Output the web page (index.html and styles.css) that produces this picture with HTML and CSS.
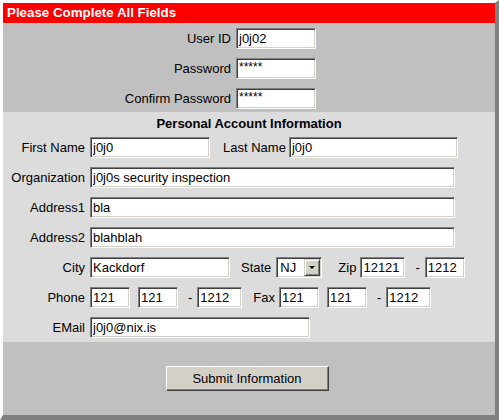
FILE: index.html
```html
<!DOCTYPE html>
<html lang="en">

<head>
    <meta charset="UTF-8">
    <title>Account Signup</title>
    <link rel="stylesheet" href="styles.css">
</head>

<body>
<form id="signup-form" class="frame">
    <div class="header">Please Complete All Fields</div>

    <!-- login data -->
    <div class="login">
        <label class="lbl">User ID</label>
        <input type="text" class="field w80" value="j0j02">
        <label class="lbl">Password</label>
        <input type="text" class="field w80 stars" value="*****">
        <label class="lbl">Confirm Password</label>
        <input type="text" class="field w80 stars" value="*****">
    </div>

    <!-- personal data -->
    <div class="personal">
        <div class="title">Personal Account Information</div>
        <div class="row">
            <label class="lbl">First Name</label>
            <input type="text" class="field w120" value="j0j0">
            <span class="sub ml13">Last Name</span>
            <input type="text" class="field w169 ml3" value="j0j0">
        </div>
        <div class="row">
            <label class="lbl">Organization</label>
            <input type="text" class="field w365" value="j0j0s security inspection">
        </div>
        <div class="row">
            <label class="lbl">Address1</label>
            <input type="text" class="field w365" value="bla">
        </div>
        <div class="row">
            <label class="lbl">Address2</label>
            <input type="text" class="field w365" value="blahblah">
        </div>
        <div class="row">
            <label class="lbl">City</label>
            <input type="text" class="field w140" value="Kackdorf">
            <span class="sub ml11">State</span>
            <span class="select ml5">
                <select>
                    <option>NJ</option>
                    <option>NY</option>
                    <option>PA</option>
                </select>
                <span class="arrow"></span>
            </span>
            <span class="sub ml16">Zip</span>
            <input type="text" class="field w45 ml4" value="12121">
            <span class="sub ml10">-</span>
            <input type="text" class="field w40 ml5" value="1212">
        </div>
        <div class="row">
            <label class="lbl">Phone</label>
            <input type="text" class="field w40" value="121">
            <input type="text" class="field w40 ml8" value="121">
            <span class="sub ml10">-</span>
            <input type="text" class="field w45 ml5" value="1212">
            <span class="sub ml11">Fax</span>
            <input type="text" class="field w40 ml4" value="121">
            <input type="text" class="field w40 ml8" value="121">
            <span class="sub ml10">-</span>
            <input type="text" class="field w45 ml5" value="1212">
        </div>
        <div class="row">
            <label class="lbl">EMail</label>
            <input type="text" class="field w220" value="j0j0@nix.is">
        </div>
    </div>

    <div class="actions">
        <button type="button" class="submit">Submit Information</button>
    </div>
</form>
</body>

</html>
```

FILE: styles.css
```css
html, body {
    margin: 0;
    height: 100%;
}

body {
    font-family: "Liberation Sans", Arial, sans-serif;
    font-size: 13px;
    color: #000;
    background-color: #fff;
}

.frame {
    box-sizing: border-box;
    width: 499px;
    height: 420px;
    margin: 0;
    border-top: 3px solid #fff;
    border-left: 3px solid #fff;
    border-right: 4px solid #808080;
    border-bottom: 5px solid #808080;
    display: flex;
    flex-direction: column;
}

.header {
    background-color: #f00;
    color: #fff;
    font-weight: bold;
    font-size: 13.33px;
    height: 20px;
    line-height: 20px;
    padding-left: 4px;
}

.login {
    background-color: #c0c0c0;
    display: grid;
    grid-template-columns: 228px auto;
    column-gap: 5px;
    row-gap: 9px;
    padding: 5px 0 3px;
    align-items: center;
}

.login .lbl {
    text-align: right;
}

.personal {
    background-color: #dcdcdc;
    padding: 4px 0 4px;
    display: flex;
    flex-direction: column;
    gap: 9px;
}

.title {
    font-weight: bold;
    text-align: center;
    line-height: 16px;
    margin-bottom: -4px;
}

.row {
    display: flex;
    align-items: center;
    height: 21px;
}

.row .lbl {
    width: 82px;
    text-align: right;
    margin-right: 5px;
    flex: none;
}

.sub {
    flex: none;
}

.field {
    box-sizing: border-box;
    height: 21px;
    margin: 0;
    padding: 0 2px;
    font-family: "Liberation Sans", Arial, sans-serif;
    font-size: 13px;
    color: #000;
    background-color: #fff;
    border: 1px solid;
    border-color: #808080 #fff #fff #808080;
    box-shadow: inset 1px 1px #404040, inset -1px -1px #d4d0c8;
    outline: none;
    flex: none;
}

.stars {
    font-size: 12px;
    padding-bottom: 4px;
}

.w40 { width: 40px; }
.w45 { width: 45px; }
.w80 { width: 80px; }
.w120 { width: 120px; }
.w140 { width: 140px; }
.w169 { width: 169px; }
.w220 { width: 220px; }
.w365 { width: 365px; }

.ml3 { margin-left: 3px; }
.ml4 { margin-left: 4px; }
.ml5 { margin-left: 5px; }
.ml8 { margin-left: 8px; }
.ml10 { margin-left: 10px; }
.ml11 { margin-left: 11px; }
.ml13 { margin-left: 13px; }
.ml16 { margin-left: 16px; }

/* fake win98 dropdown */
.select {
    position: relative;
    display: inline-block;
    width: 46px;
    height: 21px;
    flex: none;
}

.select select {
    appearance: none;
    -webkit-appearance: none;
    box-sizing: border-box;
    width: 46px;
    height: 21px;
    margin: 0;
    padding: 0 0 0 3px;
    font-family: "Liberation Sans", Arial, sans-serif;
    font-size: 13px;
    color: #000;
    background-color: #fff;
    border: 1px solid;
    border-color: #808080 #fff #fff #808080;
    box-shadow: inset 1px 1px #404040, inset -1px -1px #d4d0c8;
    border-radius: 0;
    outline: none;
}

.select .arrow {
    position: absolute;
    top: 2px;
    right: 2px;
    box-sizing: border-box;
    width: 16px;
    height: 17px;
    background-color: #d4d0c8;
    border: 1px solid;
    border-color: #d4d0c8 #404040 #404040 #d4d0c8;
    box-shadow: inset 1px 1px #fff, inset -1px -1px #808080;
    pointer-events: none;
}

.select .arrow::after {
    content: "";
    position: absolute;
    left: 4px;
    top: 6px;
    border-left: 3px solid transparent;
    border-right: 3px solid transparent;
    border-top: 3px solid #000;
}

.actions {
    flex: 1;
    background-color: #c0c0c0;
    display: flex;
    justify-content: center;
    align-items: center;
    padding-right: 4px;
}

.submit {
    box-sizing: border-box;
    width: 163px;
    height: 25px;
    font-family: "Liberation Sans", Arial, sans-serif;
    font-size: 13px;
    color: #000;
    background-color: #d4d0c8;
    border: 1px solid;
    border-color: #fff #404040 #404040 #fff;
    box-shadow: inset -1px -1px #808080;
    padding: 0;
    cursor: pointer;
}
```
